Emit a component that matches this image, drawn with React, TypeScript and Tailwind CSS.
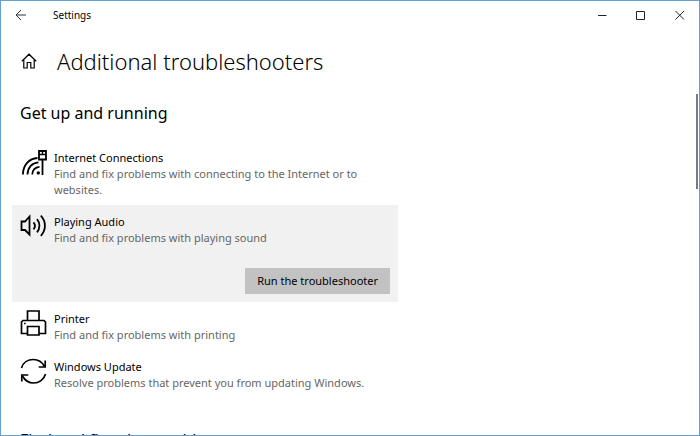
import type { ReactNode } from "react";

interface Troubleshooter {
  name: string;
  description: string;
  icon: ReactNode;
  selected?: boolean;
}

const iconClass = "h-7 w-7 shrink-0 fill-none stroke-black";

function NetworkIcon() {
  return (
    <svg viewBox="0 0 28 28" className={iconClass} strokeWidth="1.8" aria-hidden="true">
      <path d="M2.9 25.5C3.1 16 9 9.5 17.5 9" />
      <path d="M7.5 25.5C7.7 18.5 12 13.8 18.5 13.3" />
      <path d="M12.3 25.5C12.5 21 15 18.3 19.5 17.9" />
      <circle cx="18.3" cy="23.9" r="1.7" className="fill-black stroke-none" />
      <path d="M22.5 10.5V26" />
      <path d="M19 2h7v8.5h-7z" />
      <path d="M19 5.5h7M22.5 2.5v3" strokeWidth="1.4" />
    </svg>
  );
}

function SpeakerIcon() {
  return (
    <svg viewBox="0 0 28 28" className={iconClass} strokeWidth="1.8" aria-hidden="true">
      <path d="M1.5 8.5H5l4.5-5v18L5 17H1.5z" />
      <path d="M13.5 9.3c1.7 2 1.7 5 0 7" />
      <path d="M17 6.2c3.2 3.8 3.2 9.4 0 13.2" />
      <path d="M20.8 2.7c5.5 5.8 5.5 14.4 0 20.2" />
    </svg>
  );
}

function PrinterIcon() {
  return (
    <svg viewBox="0 0 28 28" className={iconClass} strokeWidth="1.7" aria-hidden="true">
      <path d="M7.5 10.5V1H19v9.5" />
      <path d="M7.5 23.5h-6V12L3 10.5h21l1.5 1.5v11.5H19" />
      <path d="M7.5 16.5H19V25H7.5z" />
      <path d="M4 13.5h1.6" />
    </svg>
  );
}

function UpdateIcon() {
  return (
    <svg viewBox="0 0 28 28" className={iconClass} strokeWidth="1.7" aria-hidden="true">
      <path d="M1.500 10C3 4.500 8 1.500 13.300 1.500c4.700 0 9 2.800 11.200 7" />
      <path d="M25.200 2.500V9h-6.500" />
      <path d="M25.500 16C24 21.500 19 25 13.700 25c-4.700 0-9-2.800-11.200-7" />
      <path d="M1.800 23.500V17h6.500" />
    </svg>
  );
}

const troubleshooters: Troubleshooter[] = [
  {
    name: "Internet Connections",
    description: "Find and fix problems with connecting to the Internet or to websites.",
    icon: <NetworkIcon />,
  },
  {
    name: "Playing Audio",
    description: "Find and fix problems with playing sound",
    icon: <SpeakerIcon />,
    selected: true,
  },
  {
    name: "Printer",
    description: "Find and fix problems with printing",
    icon: <PrinterIcon />,
  },
  {
    name: "Windows Update",
    description: "Resolve problems that prevent you from updating Windows.",
    icon: <UpdateIcon />,
  },
];

function TitleBar() {
  return (
    <header className="flex h-7 items-center">
      <button aria-label="Back" className="flex h-7 w-10 items-center justify-center">
        <svg viewBox="0 0 12 12" className="h-3 w-3 fill-none stroke-[#333]" aria-hidden="true">
          <path d="M11 6H1M6 1 1 6l5 5" />
        </svg>
      </button>
      <span className="ml-3 flex-1 text-[10px]">Settings</span>
      <button aria-label="Minimize" className="flex h-7 w-[39px] items-center justify-center">
        <svg viewBox="0 0 10 10" className="h-2.5 w-2.5 fill-none stroke-[#222]" aria-hidden="true">
          <path d="M1 5.5h8.5" />
        </svg>
      </button>
      <button aria-label="Maximize" className="flex h-7 w-[39px] items-center justify-center">
        <svg viewBox="0 0 10 10" className="h-2.5 w-2.5 fill-none stroke-[#222]" aria-hidden="true">
          <path d="M.5 1.5h8v8h-8z" />
        </svg>
      </button>
      <button aria-label="Close" className="flex h-7 w-[39px] items-center justify-center">
        <svg viewBox="0 0 10 10" className="h-2.5 w-2.5 fill-none stroke-[#222]" aria-hidden="true">
          <path d="M.5 1 9 9.500M9 1 .5 9.500" />
        </svg>
      </button>
    </header>
  );
}

function TroubleshooterItem({ name, description, icon, selected }: Troubleshooter) {
  return (
    <li className={selected ? "bg-[#f1f1f1] p-2" : "px-2 pt-2 pb-[7px]"}>
      <div className="flex gap-1.5">
        <div className="h-6 shrink-0">{icon}</div>
        <div className="pt-px">
          <h3 className="text-[11px] leading-4">{name}</h3>
          <p className="text-[11px] leading-4 text-[#666]">{description}</p>
        </div>
      </div>
      {selected && (
        <div className="mt-[22px] flex justify-end">
          <button className="h-[26px] bg-[#c2c2c2] px-3 text-[11px]">Run the troubleshooter</button>
        </div>
      )}
    </li>
  );
}

export default function App() {
  return (
    <div className="flex h-screen flex-col overflow-hidden border border-[#66a0d0] bg-white font-['Noto_Sans',sans-serif] text-black">
      <TitleBar />
      <div className="flex min-h-0 flex-1">
        <main className="min-w-0 flex-1 overflow-hidden pt-4">
          <div className="flex h-8 items-center gap-5 pl-5">
            <a href="#home" aria-label="Home">
              <svg viewBox="0 0 16 16" className="h-4 w-4 fill-none stroke-black" strokeWidth="1.2" aria-hidden="true">
                <path d="M.8 8.2 8 1.2l7.200 7M2.8 6.5V15h3.4V9.5h3.6V15h3.4V6.5" />
              </svg>
            </a>
            <h1 className="text-[22px] font-light">Additional troubleshooters</h1>
          </div>
          <h2 className="mt-6 pl-[19px] text-base leading-6">Get up and running</h2>
          <ul className="mt-4 ml-[11px] max-w-[386px]">
            {troubleshooters.map((t) => (
              <TroubleshooterItem key={t.name} {...t} />
            ))}
          </ul>
          <h2 className="mt-[30px] pl-[19px] text-base leading-6">Find and fix other problems</h2>
        </main>
        <div className="mt-[65px] mr-px h-[95px] w-0.5 bg-[#7a7a7a]" />
      </div>
    </div>
  );
}
